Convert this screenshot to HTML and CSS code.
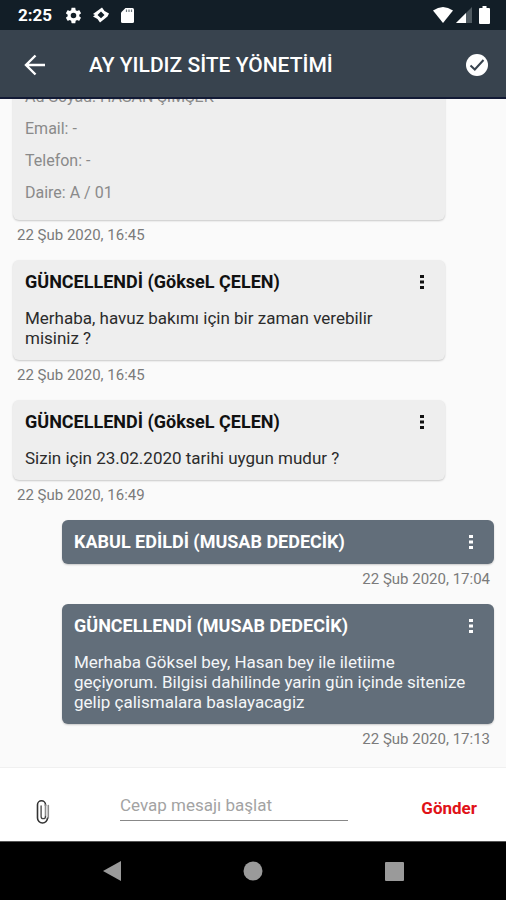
FILE: index.html
```html
<!DOCTYPE html>
<html lang="tr">
<head>
<meta charset="utf-8">
<meta name="viewport" content="width=device-width, initial-scale=1">
<title>AY YILDIZ SİTE YÖNETİMİ</title>
<link rel="stylesheet" href="styles.css">
</head>
<body>
<div class="status">
  <span class="clock">2:25</span>
  <svg class="status-icon" viewBox="1 1 22 22" width="17" height="17"><path fill="currentColor" d="M19.4 13c.1-.3.1-.6.1-1s0-.7-.1-1l2.100-1.600c.2-.2.3-.4.100-.6l-2-3.500c-.1-.2-.4-.3-.6-.2l-2.500 1c-.5-.4-1.100-.7-1.700-1l-.4-2.600c0-.3-.2-.5-.5-.5h-4c-.2 0-.4.200-.5.400l-.4 2.700c-.6.300-1.100.6-1.700 1l-2.400-1c-.2-.1-.5 0-.6.200l-2 3.400c-.1.200-.1.500.1.700L4.500 11c0 .3-.1.700-.1 1s0 .7.100 1l-2.100 1.600c-.2.200-.3.400-.1.600l2 3.500c.1.200.4.300.6.200l2.400-1c.600.400 1.100.700 1.700 1l.4 2.600c0 .3.300.5.500.5h4c.2 0 .5-.2.500-.4l.4-2.700c.600-.3 1.200-.6 1.700-1l2.400 1c.2.100.5 0 .6-.2l2-3.400c.1-.2.1-.5-.1-.6zM12 15.600a3.600 3.600 0 1 1 0-7.200 3.600 3.600 0 0 1 0 7.200z"/></svg>
  <svg class="status-icon" viewBox="1 1 16 16" width="16" height="16"><path fill="currentColor" fill-rule="evenodd" d="M1 8 10 1.500 12.500 5 17 7.500 15.500 10.500 8 16.500 5.500 13 1 10.500 3 9zM9 5.500 5.500 9 9 12.300 12.500 9z"/></svg>
  <svg class="status-icon" viewBox="0 0 14 17" width="15" height="17"><path fill="currentColor" d="M5 1h7q1.500 0 1.500 1.500v12q0 1.500-1.500 1.500H2Q.5 16 .5 14.500V5.500z"/><path stroke="#6d777d" stroke-width="1.200" d="M6 2.500v2.500M8.500 2.500v2.500M11 2.500v2.500"/></svg>
  <div class="signals">
    <svg viewBox="0 0 20 16" width="20" height="16"><path fill="currentColor" d="M0 3.500Q10-3.500 20 3.500L10 16z"/></svg>
    <svg viewBox="0 0 16 16" width="16" height="16"><path fill="#4f5a61" d="M16 0v16H0z"/><path fill="currentColor" d="M10 6v10H0z"/></svg>
    <svg viewBox="0 0 11 18" width="11" height="18"><path fill="currentColor" d="M3.500 0h4v2H10q1 0 1 1v14q0 1-1 1H1q-1 0-1-1V3q0-1 1-1h2.500z"/></svg>
  </div>
</div>

<header class="appbar">
  <button class="icon-button" type="button" aria-label="Geri"><svg viewBox="0 0 22 22" width="22" height="22"><path fill="none" stroke="currentColor" stroke-width="2.400" d="M21 11H3M11.500 1.500 2 11l9.500 9.500"/></svg></button>
  <h1 class="title">AY YILDIZ SİTE YÖNETİMİ</h1>
  <button class="icon-button" type="button" aria-label="Tamamla"><svg viewBox="0 0 22 22" width="22" height="22"><circle cx="11" cy="11" r="11" fill="currentColor"/><path fill="none" stroke="#38434e" stroke-width="2" d="m4.500 11.500 4.300 4L17.500 6"/></svg></button>
</header>

<main class="chat">
  <article class="message">
    <div class="card details">
      <p>Ad Soyad: HASAN ŞİMŞEK</p>
      <p>Email: -</p>
      <p>Telefon: -</p>
      <p>Daire: A / 01</p>
    </div>
    <time class="date">22 Şub 2020, 16:45</time>
  </article>
  <article class="message">
    <div class="card">
      <div class="card-head"><h2>GÜNCELLENDİ (GökseL ÇELEN)</h2><button class="more" type="button" aria-label="Seçenekler"><svg viewBox="0 0 4 16" width="4" height="16"><path fill="currentColor" d="M0 1h4v3H0zM0 6.500h4v3H0zM0 12h4v3H0z"/></svg></button></div>
      <p>Merhaba, havuz bakımı için bir zaman verebilir misiniz ?</p>
    </div>
    <time class="date">22 Şub 2020, 16:45</time>
  </article>
  <article class="message">
    <div class="card">
      <div class="card-head"><h2>GÜNCELLENDİ (GökseL ÇELEN)</h2><button class="more" type="button" aria-label="Seçenekler"><svg viewBox="0 0 4 16" width="4" height="16"><path fill="currentColor" d="M0 1h4v3H0zM0 6.500h4v3H0zM0 12h4v3H0z"/></svg></button></div>
      <p>Sizin için 23.02.2020 tarihi uygun mudur ?</p>
    </div>
    <time class="date">22 Şub 2020, 16:49</time>
  </article>
  <article class="message sent">
    <div class="card">
      <div class="card-head"><h2>KABUL EDİLDİ (MUSAB DEDECİK)</h2><button class="more" type="button" aria-label="Seçenekler"><svg viewBox="0 0 4 16" width="4" height="16"><path fill="currentColor" d="M0 1h4v3H0zM0 6.500h4v3H0zM0 12h4v3H0z"/></svg></button></div>
    </div>
    <time class="date">22 Şub 2020, 17:04</time>
  </article>
  <article class="message sent">
    <div class="card">
      <div class="card-head"><h2>GÜNCELLENDİ (MUSAB DEDECİK)</h2><button class="more" type="button" aria-label="Seçenekler"><svg viewBox="0 0 4 16" width="4" height="16"><path fill="currentColor" d="M0 1h4v3H0zM0 6.500h4v3H0zM0 12h4v3H0z"/></svg></button></div>
      <p>Merhaba Göksel bey, Hasan bey ile iletiime geçiyorum. Bilgisi dahilinde yarin gün içinde sitenize gelip çalismalara baslayacagiz</p>
    </div>
    <time class="date">22 Şub 2020, 17:13</time>
  </article>
</main>

<form class="composer">
  <button class="attach" type="button" aria-label="Dosya ekle"><svg viewBox="0 0 14 24" width="14" height="24"><g fill="none" stroke-linecap="round"><path stroke="#333" stroke-width="1.600" d="M9.500 5.500V4.800a4 4 0 0 0-8 0V18a5 5 0 0 0 10 0"/><path stroke="#8c8c8c" stroke-width="1.600" d="M12.300 18V5.500M9.500 5v11.500"/><path stroke="#444" stroke-width="1.300" d="M9.500 16.500a2.200 2.200 0 0 1-4.400 0V6"/></g></svg></button>
  <input class="reply" type="text" placeholder="Cevap mesajı başlat" aria-label="Cevap mesajı">
  <button class="send" type="submit">Gönder</button>
</form>

<nav class="navbar">
  <button type="button" aria-label="Geri"><svg viewBox="0 0 20 22" width="20" height="22"><path fill="currentColor" d="M20 1v20L2 11z"/></svg></button>
  <button type="button" aria-label="Ana ekran"><svg viewBox="0 0 20 20" width="20" height="20"><circle cx="10" cy="10" r="9.500" fill="currentColor"/></svg></button>
  <button type="button" aria-label="Son uygulamalar"><svg viewBox="0 0 20 20" width="20" height="20"><rect width="19" height="19" y="1" rx="1" fill="currentColor"/></svg></button>
</nav>
</body>
</html>
```

FILE: styles.css
```css
* {
  box-sizing: border-box;
}

body {
  display: flex;
  flex-direction: column;
  height: 100vh;
  margin: 0;
  overflow: hidden;
  background: #fafafa;
  font-family: Roboto, "Liberation Sans", sans-serif;
  font-size: 17px;
  line-height: 20px;
}

h1,
h2,
p {
  margin: 0;
}

svg {
  display: block;
}

button {
  display: flex;
  align-items: center;
  justify-content: center;
  padding: 0;
  border: 0;
  background: none;
  color: inherit;
  font: inherit;
}

.status {
  display: flex;
  flex: none;
  align-items: center;
  gap: 11px;
  height: 30px;
  padding: 0 16px 0 18px;
  background: #121e27;
  color: #fff;
}

.clock {
  margin-right: 2px;
  font-weight: 700;
}

.signals {
  display: flex;
  align-items: center;
  gap: 3px;
  margin-left: auto;
}

.signals svg:last-child {
  margin-left: 4px;
}

.appbar {
  display: flex;
  flex: none;
  align-items: center;
  height: 69px;
  padding: 2px 18px 0 24px;
  border-bottom: 2px solid #121a35;
  background: #38434e;
  color: #fff;
}

.title {
  flex: 1;
  margin-left: 43px;
  font-size: 21px;
  font-weight: 500;
}

.chat {
  display: flex;
  flex: 1;
  flex-direction: column;
  justify-content: flex-end;
  gap: 10px;
  min-height: 0;
  padding: 0 12px 13px 13px;
  overflow: hidden;
}

.message {
  display: flex;
  flex: none;
  flex-direction: column;
  margin-right: 49px;
}

.sent {
  margin-right: 0;
  margin-left: 49px;
}

.card {
  display: flex;
  flex-direction: column;
  gap: 16px;
  padding: 12px;
  border-radius: 6px;
  background: #eee;
  box-shadow: 0 1px 2px rgba(0, 0, 0, 0.2);
  color: #2b2b2b;
}

.card p {
  padding-right: 8px;
}

.card-head {
  display: flex;
  justify-content: space-between;
  padding-right: 9px;
  color: #111;
}

.card h2 {
  font-size: 18px;
  font-weight: 700;
}

.details {
  gap: 12px;
  padding-bottom: 17px;
  color: #8a8a8a;
  font-size: 16px;
}

.sent .card {
  background: #626e7a;
  color: #f4f6f8;
}

.sent .card-head {
  color: #fff;
}

.date {
  padding: 0 4px;
  color: #7b7b7b;
  font-size: 15px;
  line-height: 30px;
}

.sent .date {
  text-align: right;
}

.composer {
  display: flex;
  flex: none;
  align-items: center;
  height: 74px;
  padding: 0 29px 0 36px;
  border-top: 1px solid #f0f0f0;
  background: #fff;
}

.attach {
  margin: 14px 70px 0 0;
}

.reply {
  flex: 1;
  min-width: 0;
  height: 32px;
  margin-right: 73px;
  padding: 2px 0 0;
  border: 0;
  border-bottom: 1px solid #888;
  border-radius: 0;
  outline: 0;
  background: none;
  color: #2b2b2b;
  font: inherit;
}

.reply::placeholder {
  color: #a3a3a3;
  opacity: 1;
}

.send {
  margin-top: 6px;
  color: #e01218;
  font-weight: 700;
}

.navbar {
  display: flex;
  flex: none;
  align-items: center;
  justify-content: space-between;
  height: 59px;
  padding: 0 20%;
  border-top: 1px solid #555;
  background: #000;
  color: #9a9a9a;
}
```
